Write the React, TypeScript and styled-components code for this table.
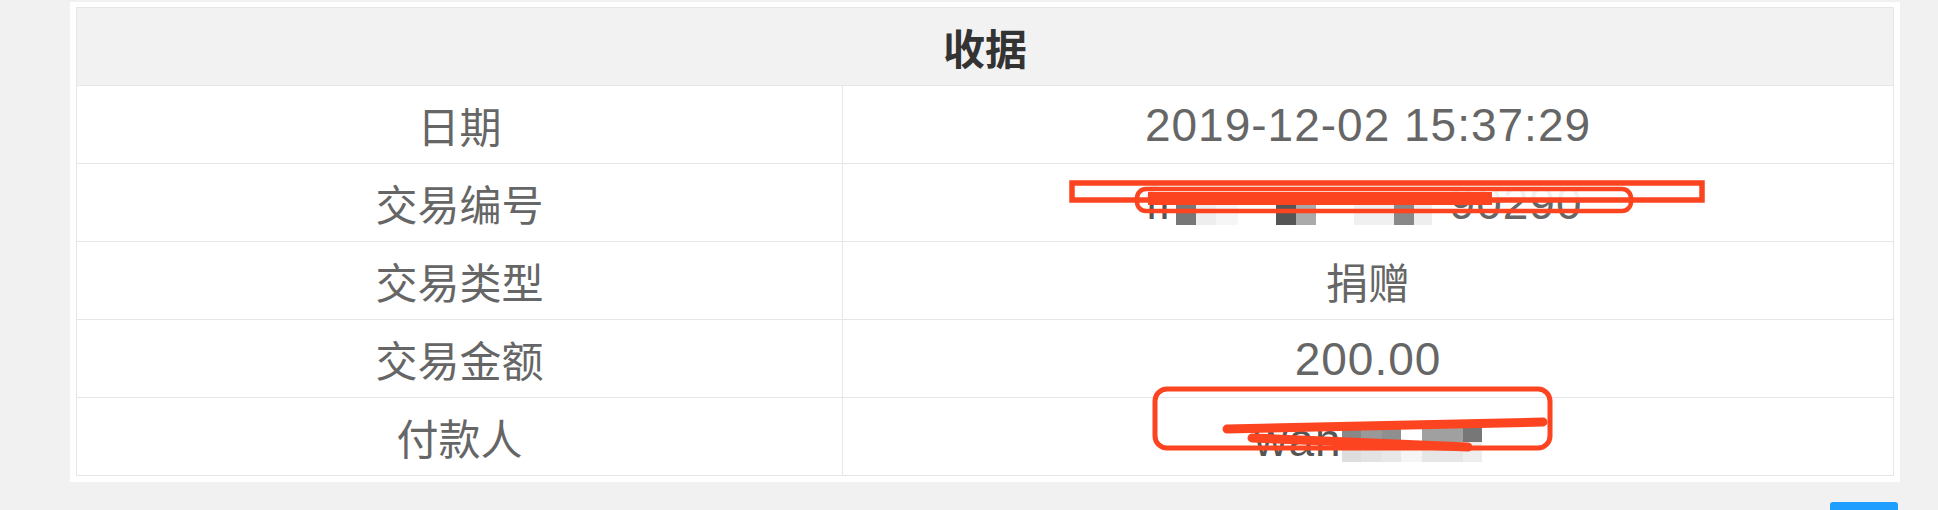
import React from 'react';
import styled, { createGlobalStyle } from 'styled-components';

const GlobalStyle = createGlobalStyle`
  html, body {
    margin: 0;
    padding: 0;
    background: #f1f1f1;
    overflow: hidden;
  }
  body {
    font-family: "Liberation Sans", "Noto Sans CJK SC", sans-serif;
  }
`;

const Page = styled.div`
  width: 1830px;
  padding: 2px 0 0 70px;
`;

const Card = styled.div`
  position: relative;
  background: #ffffff;
  padding: 5px 6px 6px 6px;
`;

const Table = styled.div`
  display: grid;
  grid-template-columns: 766px 1fr;
  grid-auto-rows: 78px;
  border: 1px solid #e6e6e6;
  border-bottom: none;
`;

const HeaderCell = styled.div`
  grid-column: 1 / -1;
  display: flex;
  align-items: center;
  justify-content: center;
  background: #f2f2f2;
  border-bottom: 1px solid #e6e6e6;
  color: #333333;
  font-family: "Noto Sans CJK SC", sans-serif;
  font-weight: 700;
  font-size: 42px;
`;

const LabelCell = styled.div`
  display: flex;
  align-items: center;
  justify-content: center;
  border-right: 1px solid #e6e6e6;
  border-bottom: 1px solid #e6e6e6;
  color: #666666;
  font-family: "Noto Sans CJK SC", sans-serif;
  font-size: 42px;
`;

const ValueCell = styled.div<{ $numeric?: boolean }>`
  display: flex;
  align-items: center;
  justify-content: center;
  border-bottom: 1px solid #e6e6e6;
  color: #666666;
  font-family: ${(p) => (p.$numeric ? '"Liberation Sans", "Noto Sans CJK SC", sans-serif' : '"Noto Sans CJK SC", sans-serif')};
  font-size: ${(p) => (p.$numeric ? '46px' : '42px')};
  letter-spacing: ${(p) => (p.$numeric ? '1px' : '0')};
`;

const Redacted = styled.span`
  display: inline-flex;
  align-items: center;
  line-height: 1;
`;

const Fragment = styled.span<{ $tone?: string; $gap?: number; $drop?: number }>`
  color: ${(p) => p.$tone || '#666666'};
  margin: ${(p) => p.$drop || 0}px ${(p) => p.$gap || 0}px 0;
`;

const BlockRow = styled.span<{ $top?: number }>`
  display: inline-flex;
  margin-top: ${(p) => p.$top || 0}px;
`;

const BlockGrid = styled.span`
  display: inline-flex;
  flex-direction: column;
  margin-top: 12px;
`;

const Block = styled.span<{ $w: number; $h: number; $c: string }>`
  display: block;
  width: ${(p) => p.$w}px;
  height: ${(p) => p.$h}px;
  background: ${(p) => p.$c};
`;

const Overlay = styled.svg`
  position: absolute;
  left: 0;
  top: 0;
  width: 1830px;
  height: 480px;
  pointer-events: none;
`;

const Footer = styled.div`
  display: flex;
  justify-content: flex-end;
  padding: 20px 2px 0 0;
`;

const Button = styled.button`
  width: 68px;
  height: 38px;
  border: none;
  border-radius: 3px;
  background: #1e9fff;
`;

const idBlocks: [number, string][] = [
  [20, '#777777'],
  [20, '#eeeeee'],
  [22, '#f6f6f6'],
  [38, 'transparent'],
  [20, '#555555'],
  [20, '#aaaaaa'],
  [38, 'transparent'],
  [40, '#f0f0f0'],
  [20, '#888888'],
  [18, '#eeeeee'],
  [10, 'transparent'],
];

const payerTop: [number, string][] = [
  [19, '#888888'],
  [21, '#999999'],
  [19, '#8f8f8f'],
  [21, '#ffffff'],
  [41, '#a0a0a0'],
  [19, '#777777'],
];

const payerBottom: [number, string][] = [
  [19, '#dddddd'],
  [21, '#e3e3e3'],
  [19, '#e8e8e8'],
  [21, '#f5f5f5'],
  [41, '#e6e6e6'],
  [19, '#eeeeee'],
];

const RED = '#fc4420';

export default function App() {
  return (
    <>
      <GlobalStyle />
      <Page>
        <Card>
          <Table>
            <HeaderCell>收据</HeaderCell>

            <LabelCell>日期</LabelCell>
            <ValueCell $numeric>2019-12-02 15:37:29</ValueCell>

            <LabelCell>交易编号</LabelCell>
            <ValueCell $numeric>
              <Redacted>
                <Fragment $tone="#555555">fr</Fragment>
                <BlockRow $top={14}>
                  {idBlocks.map(([w, c], i) => (
                    <Block key={i} $w={w} $h={30} $c={c} />
                  ))}
                </BlockRow>
                <Fragment $gap={8}>90290</Fragment>
              </Redacted>
            </ValueCell>

            <LabelCell>交易类型</LabelCell>
            <ValueCell>捐赠</ValueCell>

            <LabelCell>交易金额</LabelCell>
            <ValueCell $numeric>200.00</ValueCell>

            <LabelCell>付款人</LabelCell>
            <ValueCell $numeric>
              <Redacted>
                <Fragment $tone="#555555" $drop={6}>wan</Fragment>
                <BlockGrid>
                  <BlockRow>
                    {payerTop.map(([w, c], i) => (
                      <Block key={i} $w={w} $h={19} $c={c} />
                    ))}
                  </BlockRow>
                  <BlockRow>
                    {payerBottom.map(([w, c], i) => (
                      <Block key={i} $w={w} $h={20} $c={c} />
                    ))}
                  </BlockRow>
                </BlockGrid>
              </Redacted>
            </ValueCell>
          </Table>

          <Overlay viewBox="70 2 1830 480">
            <rect x={1072} y={183} width={630} height={17} fill="#ffffff" fillOpacity={0.9} stroke={RED} strokeWidth={5.5} />
            <rect x={1137} y={189} width={494} height={22} rx={9} fill="none" stroke={RED} strokeWidth={4.5} />
            <rect x={1148} y={192} width={344} height={13} fill={RED} />

            <rect x={1155} y={389} width={395} height={59} rx={12} fill="none" stroke={RED} strokeWidth={5} />
            <line x1={1227} y1={429} x2={1543} y2={422} stroke={RED} strokeWidth={9} strokeLinecap="round" />
            <line x1={1252} y1={438} x2={1468} y2={447} stroke={RED} strokeWidth={9} strokeLinecap="round" />
          </Overlay>
        </Card>
        <Footer>
          <Button aria-label="打印" />
        </Footer>
      </Page>
    </>
  );
}
